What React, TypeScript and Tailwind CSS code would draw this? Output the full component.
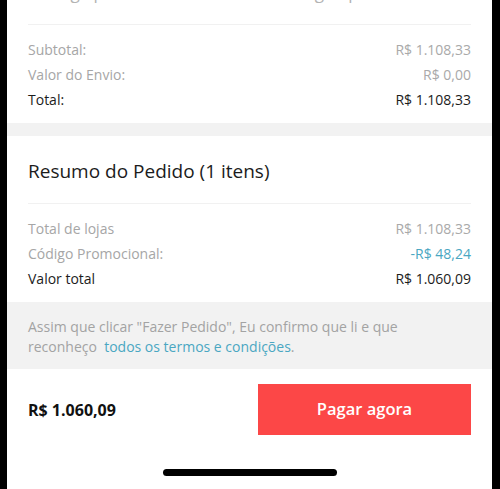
import React from "react";

const font = { fontFamily: '"Open Sans", "Noto Sans", sans-serif' };

function Row({ label, value, strong, blue }: { label: string; value: string; strong?: boolean; blue?: boolean }) {
  return (
    <div className="flex justify-between items-center h-[25px] text-[14px] leading-[25px]">
      <span className={strong ? "text-[#1c1c1c]" : "text-[#a6a6a6]"}>{label}</span>
      <span className={strong ? "text-[#1c1c1c]" : blue ? "text-[#4aa7c2]" : "text-[#a9a9a9]"}>{value}</span>
    </div>
  );
}

export default function App() {
  return (
    <div className="w-[500px] h-[489px] bg-black flex pl-[7px] overflow-hidden" style={font}>
      <div className="w-[485px] h-[489px] bg-white flex flex-col">
        <div className="px-[21px]">
          <div className="h-[25px] overflow-hidden border-b border-[#f1f1f1]">
            <div className="flex justify-between mt-[-17px] text-[17px] leading-[20px] text-[#b3b3b3] whitespace-nowrap">
              <span>Entrega padrão em 10 dias</span>
              <span>Entregue por o vendedor</span>
            </div>
          </div>
          <div className="pt-[12px] pb-[11px]">
            <Row label="Subtotal:" value="R$ 1.108,33" />
            <Row label="Valor do Envio:" value="R$ 0,00" />
            <Row label="Total:" value="R$ 1.108,33" strong />
          </div>
        </div>
        <div className="h-[13px] bg-[#f2f2f2]" />
        <div className="px-[21px]">
          <div className="pt-[23px] pb-[20px] border-b border-[#f1f1f1] text-[19px] leading-[24px] text-[#1c1c1c]">
            Resumo do Pedido (1 itens)
          </div>
          <div className="pt-[12px] pb-[11px]">
            <Row label="Total de lojas" value="R$ 1.108,33" />
            <Row label="Código Promocional:" value="-R$ 48,24" blue />
            <Row label="Valor total" value="R$ 1.060,09" strong />
          </div>
        </div>
        <div className="bg-[#f2f2f2] px-[21px] pt-[15px] pb-[12px] text-[14px] leading-[20px] text-[#a3a3a3]">
          Assim que clicar "Fazer Pedido", Eu confirmo que li e que
          <br />
          reconheço <span className="text-[#4aa7c2]">&nbsp;todos os termos e condições</span>.
        </div>
        <div className="flex items-center justify-between px-[21px] pt-[15px]">
          <span className="text-[16px] font-bold text-[#111]">R$ 1.060,09</span>
          <button className="w-[213px] h-[51px] bg-[#fc4747] text-white text-[16.5px] font-semibold">
            Pagar agora
          </button>
        </div>
        <div className="flex justify-center pt-[34px]">
          <div className="w-[174px] h-[7px] rounded-full bg-black" />
        </div>
      </div>
    </div>
  );
}
